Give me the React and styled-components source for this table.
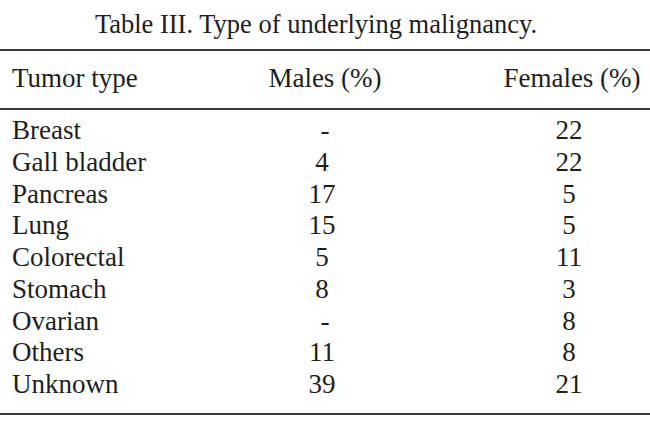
import React from "react";
import styled, { createGlobalStyle } from "styled-components";

const Global = createGlobalStyle`
  html, body { margin: 0; padding: 0; background: #fff; }
  body { width: 650px; height: 422px; overflow: hidden; }
`;

const Page = styled.div`
  width: 650px;
  font-family: "Liberation Serif", "Times New Roman", serif;
  color: #1e1e1e;
`;

const Caption = styled.div`
  padding: 9px 18px 0 0;
  font-size: 26.5px;
  line-height: 30px;
  text-align: center;
  margin-bottom: 10px;
`;

const Section = styled.div`
  border-top: 2px solid #3a3a3a;
  padding: ${(p) => p.$pad};
  ${(p) => (p.$last ? "border-bottom: 2px solid #3a3a3a;" : "")}
`;

const Row = styled.div`
  display: grid;
  grid-template-columns: 144px 332px 162px;
  padding-left: 12px;
  font-size: 27px;
  line-height: ${(p) => (p.$head ? "30px" : "31.75px")};
`;

const Cell = styled.div`
  text-align: ${(p) => (p.$left ? "left" : "center")};
  white-space: nowrap;
  padding-left: ${(p) => (p.$shift ? "6px" : "0")};
`;

const rows = [
  ["Breast", "-", "22"],
  ["Gall bladder", "4", "22"],
  ["Pancreas", "17", "5"],
  ["Lung", "15", "5"],
  ["Colorectal", "5", "11"],
  ["Stomach", "8", "3"],
  ["Ovarian", "-", "8"],
  ["Others", "11", "8"],
  ["Unknown", "39", "21"],
];

export default function App() {
  return (
    <Page>
      <Global />
      <Caption>Table III. Type of underlying malignancy.</Caption>
      <Section $pad="12px 0 15px 0">
        <Row $head>
          <Cell $left>Tumor type</Cell>
          <Cell $shift>Males (%)</Cell>
          <Cell $shift>Females (%)</Cell>
        </Row>
      </Section>
      <Section $pad="5px 0 12px 0" $last>
        {rows.map(([t, m, f]) => (
          <Row key={t}>
            <Cell $left>{t}</Cell>
            <Cell $shift={m === "-"}>{m}</Cell>
            <Cell>{f}</Cell>
          </Row>
        ))}
      </Section>
    </Page>
  );
}
